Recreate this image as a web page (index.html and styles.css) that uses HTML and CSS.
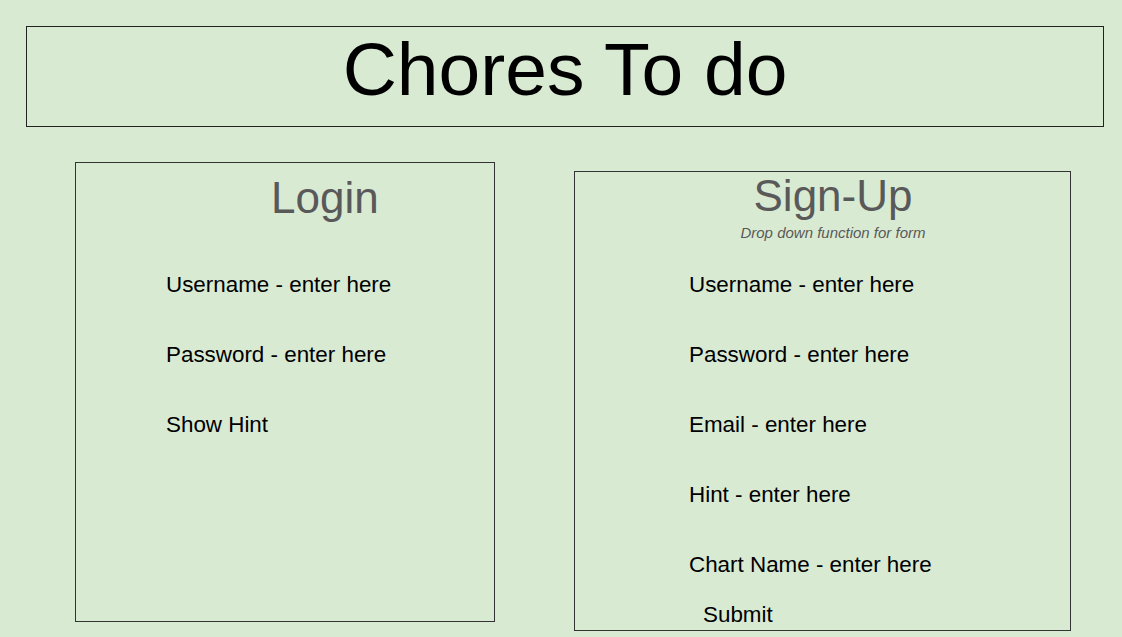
FILE: index.html
```html
<!DOCTYPE html>
<html lang="en">
<head>
<meta charset="utf-8">
<title>Chores To do</title>
<link rel="stylesheet" href="styles.css">
</head>
<body>
  <header class="title-box">
    <h1 class="title">Chores To do</h1>
  </header>
  <main class="panels">
    <section class="panel panel-login">
      <h2 class="panel-heading login-heading">Login</h2>
      <ul class="fields login-fields">
        <li>Username - enter here</li>
        <li>Password - enter here</li>
        <li>Show Hint</li>
      </ul>
    </section>
    <section class="panel panel-signup">
      <h2 class="panel-heading signup-heading">Sign-Up</h2>
      <p class="note">Drop down function for form</p>
      <ul class="fields signup-fields">
        <li>Username - enter here</li>
        <li>Password - enter here</li>
        <li>Email - enter here</li>
        <li>Hint - enter here</li>
        <li>Chart Name - enter here</li>
      </ul>
      <div class="submit">Submit</div>
    </section>
  </main>
</body>
</html>
```

FILE: styles.css
```css
html, body {
  margin: 0;
  padding: 0;
}

body {
  background: #d9ead3;
  font-family: "Liberation Sans", Arial, sans-serif;
  color: #000;
  padding: 26px 0 0 26px;
  width: 1122px;
  height: 637px;
  box-sizing: border-box;
  overflow: hidden;
}

.title-box {
  width: 1078px;
  height: 101px;
  box-sizing: border-box;
  border: 1px solid #222;
  padding-top: 5px;
}

.title {
  margin: 0;
  font-size: 75px;
  font-weight: normal;
  line-height: 1;
  text-align: center;
}

.panels {
  display: flex;
  align-items: flex-start;
  margin-top: 35px;
}

.panel {
  box-sizing: border-box;
  border: 1px solid #333;
  height: 460px;
}

.panel-login {
  width: 420px;
  margin-left: 49px;
  padding-top: 13px;
}

.panel-signup {
  width: 497px;
  margin-left: 79px;
  margin-top: 9px;
  padding-top: 2px;
}

.panel-heading {
  margin: 0;
  font-size: 44px;
  font-weight: normal;
  line-height: 1;
  color: #595959;
}

.login-heading {
  padding-left: 195px;
}

.signup-heading {
  text-align: center;
  padding-left: 21px;
}

.note {
  margin: 7px 0 0;
  font-size: 15px;
  line-height: 1;
  font-style: italic;
  color: #595959;
  text-align: center;
  padding-left: 21px;
}

.fields {
  list-style: none;
  margin: 0;
  padding: 0;
  display: flex;
  flex-direction: column;
  gap: 48px;
  font-size: 22.4px;
  line-height: 22px;
}

.login-fields {
  margin-top: 54px;
  padding-left: 90px;
}

.signup-fields {
  margin-top: 34px;
  padding-left: 114px;
}

.submit {
  font-size: 22.4px;
  line-height: 22px;
  margin-top: 28px;
  padding-left: 128px;
}
```
